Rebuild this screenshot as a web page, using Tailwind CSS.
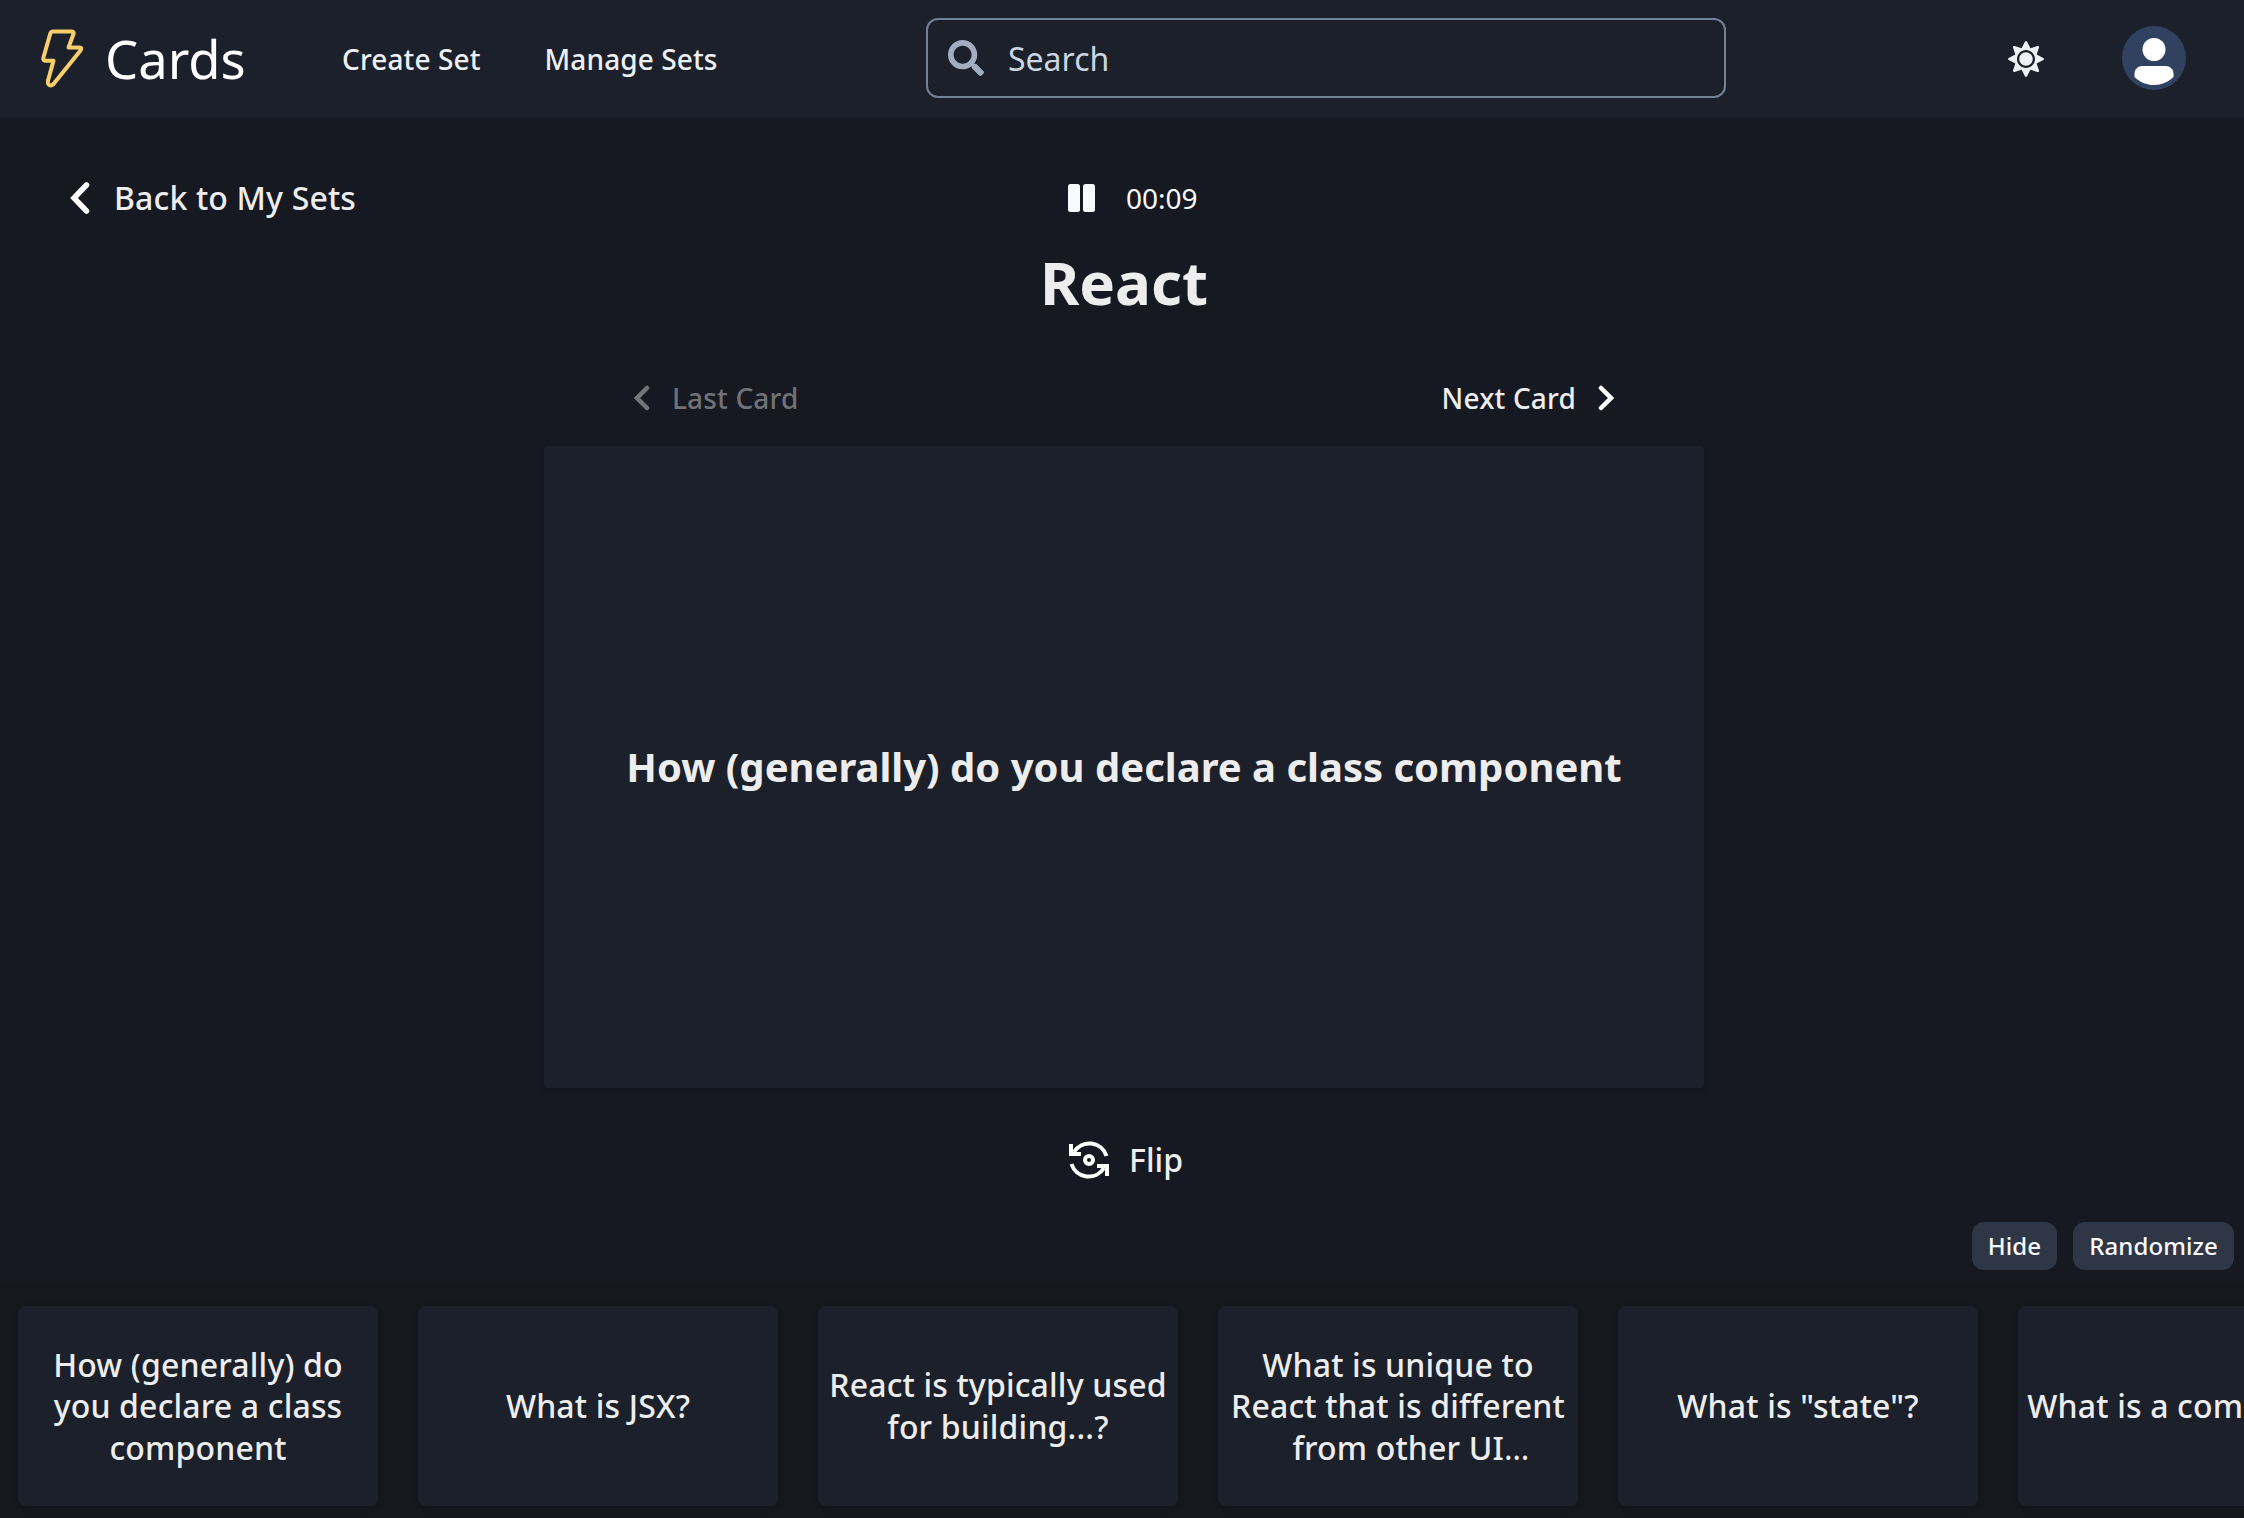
<!DOCTYPE html>
<html lang="en">
<head>
<meta charset="utf-8">
<title>Cards</title>
<script src="https://cdn.jsdelivr.net/npm/@tailwindcss/browser@4"></script>
</head>
<body class="h-[1518px] w-[2244px] overflow-hidden bg-[#161922] font-['Noto_Sans',sans-serif] text-[#ededed]">
<div class="flex h-full flex-col">
  <header class="flex h-[118px] shrink-0 items-center bg-[#1c202a]">
    <a class="flex w-[342px] items-center pl-[40px]">
      <svg class="h-[60px] w-[45px]" viewBox="0 0 45 60" fill="none" stroke="#f8ce6a" stroke-width="4" stroke-linejoin="round"><path d="M13 2.500H31.500Q34.500 2.500 33.500 5L28.500 18.500H39.500Q42.500 18.500 40.500 21.500L13.500 55Q10.500 58 8.300 55Q7.500 54 8 51.500L13.500 31.700H5Q3 31.700 3.300 29L10.300 4.500Q11 2.500 13 2.500Z"/></svg>
      <span class="ml-[20px] text-[52.5px] leading-[74px] text-white">Cards</span>
    </a>
    <nav class="flex w-[584px] gap-[64px] text-[28px] font-medium tracking-[0.004em] text-[#edf1f6]">
      <a>Create Set</a><a>Manage Sets</a>
    </nav>
    <div class="mb-[2px] flex h-[80px] w-[800px] items-center rounded-[12px] border-2 border-[#738096] pl-5">
      <svg class="size-9" viewBox="0 0 512 512" fill="#a2aec0"><path d="M505 442.700L405.300 343c-4.500-4.500-10.600-7-17-7H372c27.600-35.300 44-79.700 44-128C416 93.100 322.900 0 208 0S0 93.100 0 208s93.100 208 208 208c48.300 0 92.700-16.400 128-44v16.300c0 6.400 2.500 12.500 7 17l99.700 99.700c9.400 9.400 24.600 9.400 33.900 0l28.300-28.300c9.400-9.400 9.400-24.600.1-34zM208 336c-70.700 0-128-57.200-128-128 0-70.700 57.200-128 128-128 70.700 0 128 57.200 128 128 0 70.700-57.200 128-128 128z"/></svg>
      <span class="ml-[24px] pt-[2px] text-[32px] text-[#ccd5e0]">Search</span>
    </div>
    <div class="flex flex-1 items-center justify-end gap-[78px] pr-[58px]">
      <svg class="size-9" viewBox="0 0 512 512" fill="#edf1f6"><path d="M256 160c-52.900 0-96 43.100-96 96s43.100 96 96 96 96-43.100 96-96-43.100-96-96-96zm246.400 80.500l-94.700-47.300 33.500-100.400c4.500-13.600-8.400-26.500-21.900-21.900l-100.400 33.500-47.400-94.800c-6.400-12.800-24.600-12.800-31 0l-47.300 94.700L92.700 70.800c-13.600-4.500-26.500 8.400-21.900 21.900l33.500 100.400-94.700 47.400c-12.800 6.400-12.800 24.600 0 31l94.700 47.300-33.500 100.500c-4.500 13.600 8.400 26.500 21.900 21.900l100.400-33.500 47.300 94.700c6.400 12.800 24.600 12.800 31 0l47.300-94.700 100.400 33.500c13.600 4.500 26.500-8.400 21.900-21.900l-33.500-100.400 94.700-47.300c13-6.500 13-24.700.2-31.100zm-155.900 106c-49.900 49.900-131.100 49.900-181 0-49.900-49.900-49.900-131.100 0-181 49.900-49.900 131.100-49.900 181 0 49.900 49.900 49.900 131.100 0 181z"/></svg>
      <svg class="mb-[2px] size-16 rounded-full bg-[#304260]" viewBox="0 0 128 128" fill="#fff"><path d="M103,102.1388 C93.094,111.92 79.3504,118 64.1638,118 C48.8056,118 34.9294,111.768 25,101.7892 L25,95.2 C25,86.8096 31.981,80 40.6,80 L87.4,80 C96.019,80 103,86.8096 103,95.2 L103,102.1388 Z"/><circle cx="64" cy="47" r="23"/></svg>
    </div>
  </header>

  <div class="mt-[58px] grid h-[44px] shrink-0 grid-cols-[1068px_1fr] items-center">
    <a class="flex items-center pl-[70px] text-[32px] font-medium tracking-[0.005em]">
      <svg class="h-[32px] w-[20px]" viewBox="0 0 20 32" fill="none" stroke="#fff" stroke-width="5.500" stroke-linecap="round"><path d="M16.500 3L4 16L16.500 29"/></svg>
      <span class="ml-[24px] leading-[44px]">Back to My Sets</span>
    </a>
    <div class="flex items-center text-[28px] text-[#f8fafc]">
      <svg class="h-[28px] w-[27px]" viewBox="0 0 27 28" fill="#f8fafc"><rect width="12" height="28" rx="2.500"/><rect x="15" width="12" height="28" rx="2.500"/></svg>
      <span class="ml-[31px] leading-[44px]">00:09</span>
    </div>
  </div>

  <h1 class="mt-[22px] shrink-0 pl-[4px] text-center text-[60px] leading-[80px] font-bold">React</h1>

  <main class="ml-[544px] w-[1160px] shrink-0">
    <div class="mt-[54px] flex h-[44px] items-center justify-between px-[90px] text-[28px] font-medium tracking-[0.006em]">
      <button class="flex items-center text-[#707176]">
        <svg class="h-[26px] w-[16px]" viewBox="0 0 16 26" fill="none" stroke="#74757a" stroke-width="4.500" stroke-linecap="round"><path d="M13 3L3 13L13 23"/></svg>
        <span class="ml-[22px]">Last Card</span>
      </button>
      <button class="flex items-center">
        <span class="mr-[22px]">Next Card</span>
        <svg class="h-[26px] w-[16px]" viewBox="0 0 16 26" fill="none" stroke="#fff" stroke-width="4.500" stroke-linecap="round"><path d="M3 3L13 13L3 23"/></svg>
      </button>
    </div>
    <section class="mt-[26px] flex h-[642px] items-center justify-center rounded-[4px] bg-[#1c202a] shadow-[0_2px_6px_rgba(0,0,0,0.2)]">
      <h2 class="text-[40px] leading-[52px] font-bold whitespace-nowrap">How (generally) do you declare a class component</h2>
    </section>
    <button class="mt-[50px] flex h-[44px] w-full items-center pl-[525px] text-[32px] font-medium">
      <svg class="h-[40px] w-[40px]" viewBox="0 0 40 40" fill="none" stroke="#fff" stroke-width="4"><path d="M5 12A18 18 0 0 1 37.500 16M35 28A18 18 0 0 1 2.500 24M2 4V14H12M38 36V26H28"/><circle cx="20" cy="20" r="4"/></svg>
      <span class="ml-[20px]">Flip</span>
    </button>
  </main>

  <div class="mt-[40px] flex h-[48px] shrink-0 justify-end gap-4 pr-[10px] text-[24px] font-medium tracking-[0.004em] text-[#f8fafc]">
    <button class="rounded-[12px] bg-[#2f3645] px-4 leading-[48px]">Hide</button>
    <button class="rounded-[12px] bg-[#2f3645] px-4 leading-[48px]">Randomize</button>
  </div>

  <div class="mt-4 flex h-[232px] shrink-0 gap-[40px] overflow-hidden bg-[#161820] px-[18px] pt-[20px] text-center text-[32px] leading-[41.6px] font-medium tracking-[0.005em]">
    <div class="flex h-[200px] w-[360px] shrink-0 items-center justify-center rounded-[8px] bg-[#1c202a] shadow-[0_2px_6px_rgba(0,0,0,0.2)]"><p>How (generally) do<br>you declare a class<br>component</p></div>
    <div class="flex h-[200px] w-[360px] shrink-0 items-center justify-center rounded-[8px] bg-[#1c202a] shadow-[0_2px_6px_rgba(0,0,0,0.2)]"><p>What is JSX?</p></div>
    <div class="flex h-[200px] w-[360px] shrink-0 items-center justify-center rounded-[8px] bg-[#1c202a] shadow-[0_2px_6px_rgba(0,0,0,0.2)]"><p class="whitespace-nowrap">React is typically used<br>for building...?</p></div>
    <div class="flex h-[200px] w-[360px] shrink-0 items-center justify-center rounded-[8px] bg-[#1c202a] shadow-[0_2px_6px_rgba(0,0,0,0.2)]"><p class="whitespace-nowrap">What is unique to<br>React that is different<br><span class="pl-[26px]">from other UI<span class="font-normal">…</span></span></p></div>
    <div class="flex h-[200px] w-[360px] shrink-0 items-center justify-center rounded-[8px] bg-[#1c202a] shadow-[0_2px_6px_rgba(0,0,0,0.2)]"><p>What is "state"?</p></div>
    <div class="flex h-[200px] w-[360px] shrink-0 items-center justify-center rounded-[8px] bg-[#1c202a] shadow-[0_2px_6px_rgba(0,0,0,0.2)]"><p class="whitespace-nowrap">What is a component?</p></div>
  </div>
</div>
</body>
</html>
